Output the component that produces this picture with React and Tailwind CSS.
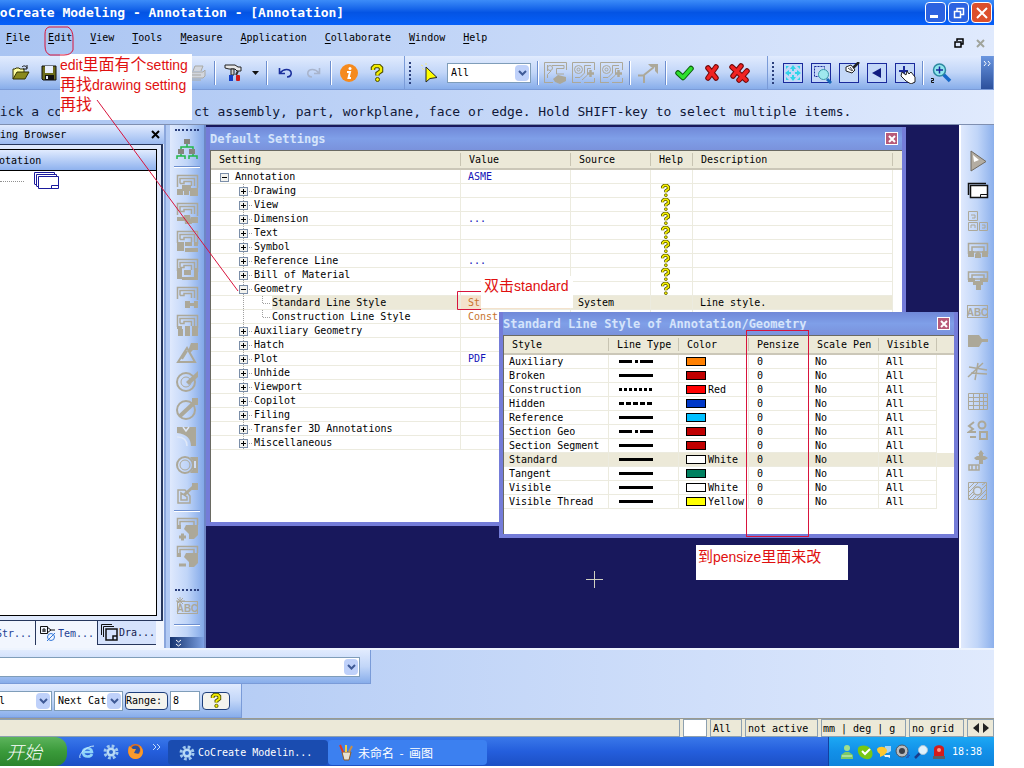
import React, { useState } from 'react';

// --- Data ---
const menus = ['File', 'Edit', 'View', 'Tools', 'Measure', 'Application', 'Collaborate', 'Window', 'Help'];

const settings = [
    { name: 'Annotation', level: 0, open: true, value: 'ASME' },
    { name: 'Drawing', level: 1, help: true },
    { name: 'View', level: 1, help: true },
    { name: 'Dimension', level: 1, value: '...', help: true },
    { name: 'Text', level: 1, help: true },
    { name: 'Symbol', level: 1, help: true },
    { name: 'Reference Line', level: 1, value: '...', help: true },
    { name: 'Bill of Material', level: 1, help: true },
    { name: 'Geometry', level: 1, open: true, help: true },
    { name: 'Standard Line Style', level: 2, value: 'St', changed: true, source: 'System', description: 'Line style.' },
    { name: 'Construction Line Style', level: 2, value: 'Const', changed: true },
    { name: 'Auxiliary Geometry', level: 1 },
    { name: 'Hatch', level: 1 },
    { name: 'Plot', level: 1, value: 'PDF' },
    { name: 'Unhide', level: 1 },
    { name: 'Viewport', level: 1 },
    { name: 'Copilot', level: 1 },
    { name: 'Filing', level: 1 },
    { name: 'Transfer 3D Annotations', level: 1 },
    { name: 'Miscellaneous', level: 1 },
];

const lineStyles = [
    { name: 'Auxiliary', dash: '13 3 3 2', color: '#ff8000', label: '' },
    { name: 'Broken', dash: '', color: '#c00000', label: '' },
    { name: 'Construction', dash: '3 2', color: '#ff0000', label: 'Red' },
    { name: 'Hidden', dash: '5 2', color: '#0038c8', label: '' },
    { name: 'Reference', dash: '', color: '#00c0ff', label: '' },
    { name: 'Section Geo', dash: '13 3 3 2', color: '#c00000', label: '' },
    { name: 'Section Segment', dash: '', color: '#c00000', label: '' },
    { name: 'Standard', dash: '', color: '#ffffff', label: 'White' },
    { name: 'Tangent', dash: '', color: '#008060', label: '' },
    { name: 'Visible', dash: '', color: '#ffffff', label: 'White' },
    { name: 'Visible Thread', dash: '', color: '#ffff00', label: 'Yellow' },
];

// --- Icons ---
const Svg = ({ w = 22, h = 22, children }) => (
    <svg width={w} height={h} viewBox={`0 0 ${w} ${h}`} fill="none" className="shrink-0" aria-hidden="true">
        {children}
    </svg>
);

const HelpMark = ({ w = 11, h = 13 }) => (
    <svg width={w} height={h} viewBox="0 0 14 18" fill="none" className="shrink-0" aria-hidden="true">
        <path d="M3 6V4L5 2H9L11 4V7L7.500 9.500V11.500" stroke="#4d4d00" strokeWidth="4.500" />
        <path d="M3 6V4L5 2H9L11 4V7L7.500 9.500V11.500" stroke="#f4ee00" strokeWidth="2.400" />
        <circle cx="7.500" cy="15.500" r="2" fill="#f4ee00" stroke="#4d4d00" />
    </svg>
);

const Chevron = () => (
    <Svg w={9} h={6}><path d="M1 1L4.500 4.500L8 1" stroke="#3f5a96" strokeWidth="2" /></Svg>
);

const FolderIcon = () => (
    <Svg w={18} h={16}>
        <path d="M1 14V4H3L4 3H7L8 4H12V7" fill="#ffffa0" stroke="#333300" />
        <path d="M1 14L5 7H17L13 14Z" fill="#8a8a1c" stroke="#333300" />
        <path d="M10 2C12 0 14 1 15 3M15 0V4H11" stroke="#111" />
    </Svg>
);

const SaveIcon = () => (
    <Svg w={16} h={16}>
        <path d="M1 1H15V15H2L1 14Z" fill="#6b6b1a" stroke="#111" />
        <rect x="4" y="1" width="8" height="7" fill="#e8eefc" />
        <rect x="4" y="10" width="9" height="5" fill="#111" />
        <rect x="5" y="11" width="2" height="3" fill="#e8eefc" />
    </Svg>
);

const PrintIcon = () => (
    <Svg w={18} h={16}>
        <path d="M5 6L7 1H15L13 6M2 7H15L17 5V11L15 13H2ZM4 10H13M4 15H13" stroke="#a9a9a4" fill="#d2d6de" />
    </Svg>
);

const HammerIcon = () => (
    <Svg w={19} h={19}>
        <path d="M1 2H11L14 4H17V8H13L11 6H5L1 5Z" fill="#e8e8e8" stroke="#222" />
        <path d="M7 6H10V12H7Z" fill="#cfcfcf" stroke="#222" />
        <path d="M14 8L12 12" stroke="#333" strokeWidth="2" />
        <rect x="5" y="12" width="4" height="6" fill="#1240c8" />
        <rect x="12" y="12" width="4" height="6" rx="1" fill="#d01818" />
    </Svg>
);

const UndoIcon = ({ color = '#1a2f9c', flip = false }) => (
    <Svg w={15} h={12}>
        <path
            d={flip ? 'M13.500 1V6.500H8M13 6C9 1 3 2 2 5C1 8 3 10 6 10' : 'M1.500 1V6.500H7M2 6C6 1 12 2 13 5C14 8 12 10 9 10'}
            stroke={color}
            strokeWidth="1.600"
        />
    </Svg>
);

const InfoIcon = () => (
    <Svg w={20} h={20}>
        <circle cx="10" cy="10" r="9" fill="#f58a1e" />
        <circle cx="11" cy="5.500" r="1.500" fill="#fff" />
        <path d="M8 9H11L9.500 15H12" stroke="#fff" strokeWidth="2" />
    </Svg>
);

const CursorIcon = () => (
    <Svg w={18} h={20}>
        <path d="M5 4V19L9 15.500L16 14.500Z" fill="#ffff00" stroke="#222" />
        <path d="M1 5L3 7M5 0V2M0 2L2 3" stroke="#f0e68c" />
    </Svg>
);

const grey = '#aca899';

const AnnoViewIcon = ({ kind }) => (
    <Svg w={24} h={22}>
        <path d="M0.500 21V0.500H22.500V8M0.500 20.500H9" stroke={grey} />
        {kind === 0 ? (
            <>
                <path d="M3.500 16V12.500L7 9M8 3.500H20V6.500H12.500V12H20M3.500 3V9" stroke={grey} />
                <circle cx="6" cy="6" r="2.500" stroke={grey} />
                <path d="M9 17L14 13L22 15V19L16 22L11 20Z" fill={grey} />
            </>
        ) : (
            <>
                <circle cx="6.500" cy="7.500" r="4" stroke={grey} />
                <circle cx="6.500" cy="7.500" r="1.500" stroke={grey} />
                <path d="M3 15.500H8L12.500 11V3.500H19M10 18L15.500 13V6.500H19" stroke={grey} />
                <path d="M15 11.500H22M18.500 8V15" stroke={grey} strokeWidth="2.500" />
                <path d="M12 20.500H22.500V16" stroke={grey} />
            </>
        )}
    </Svg>
);

const ArrowUpIcon = () => (
    <Svg w={20} h={20}>
        <path d="M0 12.500H6V20M6 12L16 4" stroke={grey} strokeWidth="2" />
        <path d="M10 1H20V11L17 8V4H13Z" fill={grey} />
    </Svg>
);

const CheckIcon = () => (
    <Svg w={19} h={16}>
        <path d="M3 8L8 12.500L16 3.500" stroke="#0a5c0a" strokeWidth="5.500" strokeLinecap="round" strokeLinejoin="round" />
        <path d="M3 8L8 12.500L16 3.500" stroke="#2fe02f" strokeWidth="3.500" strokeLinecap="round" strokeLinejoin="round" />
    </Svg>
);

const crossPath = 'M4 4L12 14M12 3L4 14';
const CrossIcon = () => (
    <Svg w={16} h={18}>
        <path d={crossPath} stroke="#6e0808" strokeWidth="5.500" strokeLinecap="round" />
        <path d={crossPath} stroke="#f02222" strokeWidth="3.500" strokeLinecap="round" />
    </Svg>
);

const DoubleCrossIcon = () => (
    <Svg w={22} h={20}>
        <path d="M3 4L17 17M12 3L4 13M18 8L10 17" stroke="#6e0808" strokeWidth="5.500" strokeLinecap="round" />
        <path d="M3 4L17 17M12 3L4 13M18 8L10 17" stroke="#f02222" strokeWidth="3.500" strokeLinecap="round" />
    </Svg>
);

const BoxedIcon = ({ kind }) => (
    <Svg w={22} h={22}>
        <rect x="1.500" y="1.500" width="19" height="19" fill="#c4d8f8" stroke="#1a2a9c" />
        {kind === 'fit' && (
            <g fill="#30d4e8">
                <path d="M11 3L14 7H12V9H10V7H8ZM11 19L14 15H12V13H10V15H8ZM3 11L7 8V10H9V12H7V14ZM19 11L15 8V10H13V12H15V14Z" />
                <path d="M4 4H7L4 7ZM18 4V7L15 4ZM4 18V15L7 18ZM18 18H15L18 15Z" />
            </g>
        )}
        {kind === 'window' && (
            <>
                <rect x="4.500" y="4.500" width="10" height="10" stroke="#1a2a9c" strokeDasharray="2 1" />
                <path d="M17 17L21 21" stroke="#1668b8" strokeWidth="3" />
                <circle cx="13.500" cy="12.500" r="5" fill="#9fe8ee" stroke="#3c98a8" />
            </>
        )}
        {kind === 'brush' && (
            <>
                <path d="M21 0L15 6" stroke="#222" strokeWidth="2.500" />
                <path d="M8 5L13 3L17 8L14 11L8 9Z" fill="#fff" stroke="#222" />
                <path d="M10 6L14 9M12 5L15 9" stroke="#444" />
            </>
        )}
        {kind === 'back' && <path d="M6 11L15 6V16Z" fill="#101c80" />}
        {kind === 'pan' && (
            <>
                <path d="M10 4V13M5 9H14" stroke="#1a2a9c" strokeWidth="2" />
                <path d="M8 10L12 13L13 9L15 12L17 10L21 15V20L17 22L12 19L7 14Z" fill="#fff" stroke="#222" />
            </>
        )}
    </Svg>
);

const ZoomPlusIcon = () => (
    <Svg w={22} h={22}>
        <path d="M13 12L20 19" stroke="#1668c8" strokeWidth="3.500" />
        <circle cx="9.500" cy="8" r="6" fill="#8fe6ec" stroke="#2d88a0" strokeWidth="1.500" />
        <path d="M9.500 4.500V11.500M6 8H13" stroke="#1a2a9c" strokeWidth="1.500" />
        <path d="M1 16.500H3.500V18.500H1.500V20.500H4" stroke="#111" />
    </Svg>
);

const TreeIcon = () => (
    <Svg w={22} h={22}>
        <path d="M11 6V9M5 11V9H17V11M5 15V18M1 21V18H9V21M17 15V18M13 21V18H21V21" stroke="#22b84a" strokeWidth="1.500" />
        <rect x="8" y="1" width="6" height="5" fill="#85857d" />
        <rect x="2" y="11" width="6" height="5" fill="#85857d" />
        <rect x="13" y="11" width="6" height="5" fill="#85857d" />
    </Svg>
);

// lower halves of the sheet tools in the side bar
const sheetTails = [
    'M1 15H7V21H1ZM8 16H13V21H8ZM14 14H22V22H14ZM6 11H15V17H6Z',
    'M1 15H9V19H1ZM8 13H14L16 22H9ZM15 15H22V21H15Z',
    'M1 12H8V21H1ZM9 12H16V16H9ZM9 18H22V22H9ZM18 12H22V16H18Z',
    'M1 10H6V21H1ZM8 12H15V17H8ZM6 19H22V22H6ZM18 10H22V19H18Z',
    'M9 15H14V22H9ZM14 17H18V20H14ZM18 15H22V22H18Z',
    'M1 12H6V15H1ZM2 15H7V22H2ZM9 12H14V22H9ZM16 12H22V22H16Z',
];

const SheetIcon = ({ tail }) => (
    <Svg w={23} h={23}>
        <path d="M1.500 13V1.500H21.500V14M4 9.500V4.500H18.500V12M4 9.500H8V7.500H15.500V12" stroke={grey} strokeWidth="1.500" />
        <path d={tail} fill={grey} />
    </Svg>
);

const sideShapes = [
    <g key="angle"><path d="M2 20L11 6L19 20Z M6 17L11 9" stroke={grey} strokeWidth="2" /><path d="M15 1H22V8H17L14 11L12 9Z" fill={grey} /></g>,
    <g key="radius"><circle cx="10" cy="12" r="9" stroke={grey} strokeWidth="2" /><circle cx="10" cy="12" r="5" stroke={grey} /><path d="M10 12L22 1V7L13 15Z" fill={grey} /></g>,
    <g key="dia"><circle cx="10" cy="12" r="9" stroke={grey} strokeWidth="2" /><path d="M4 18L19 4" stroke={grey} strokeWidth="4" /><path d="M16 0H22V7H16Z" fill={grey} /></g>,
    <g key="arc"><path d="M1 1H20V20H15C15 13 11 8 1 7Z" fill={grey} /><path d="M1 11C8 11 11 15 11 20M7 1L10 5L13 1" stroke="#dfe8f8" strokeWidth="1.500" /></g>,
    <g key="slot"><circle cx="9" cy="11" r="8" stroke={grey} strokeWidth="2" /><circle cx="9" cy="11" r="5" stroke={grey} /><path d="M14 3H22V19H14L17 15V7Z" fill={grey} /><path d="M18 7H20V14H18Z" fill="#cfdcf4" /></g>,
    <g key="leader"><path d="M2 8H9L14 14V21H2ZM5 11V18H11V15Z" stroke={grey} strokeWidth="1.500" /><path d="M8 13L17 5" stroke={grey} strokeWidth="3" /><path d="M16 1H22V8H16Z" fill={grey} /></g>,
];

const SheetTool = ({ plus }) => (
    <Svg w={23} h={24}>
        <path d="M1.500 12V1.500H21.500V8M4 10V4.500H18V8" stroke={grey} strokeWidth="1.500" />
        <path d="M1 8H5V12H1ZM10 8H22V18L18 22H13V17L8 12Z" fill={grey} />
        <path d={plus ? 'M3 20H10M6.500 16.500V23.500' : 'M3 20H10'} stroke={grey} strokeWidth="3" />
    </Svg>
);

const AbcIcon = ({ star }) => (
    <Svg w={23} h={20}>
        <rect x="1.500" y="4.500" width="20" height="12" stroke={grey} />
        {star && <path d="M4 0V9M0 4H9M1 1L7 7M7 1L1 7" stroke={grey} />}
        <text x="11.500" y="14.500" textAnchor="middle" fontSize="10" fontWeight="bold" fontFamily="Liberation Sans, sans-serif" fill={grey}>ABC</text>
    </Svg>
);

const SheetsIcon = ({ color = '#1a1a9c' }) => (
    <Svg w={25} h={18}>
        <path d="M0.500 12V0.500H20.500V3M2.500 14V2.500H22.500V5M0.500 12.500H2M2.500 14.500H4" stroke={color} />
        <path d="M4.500 4.500H24.500V16.500H4.500Z" fill="#fff" stroke={color} />
        <path d="M17.500 17V13.500H24" stroke={color} />
    </Svg>
);

const rightIcons = [
    <Svg key="play"><path d="M4 1L19 11.500L4 21Z" fill="#b4ada2" stroke="#6f6a62" /><path d="M6 5L12 10L7 12Z" fill="#fff" /></Svg>,
    <Svg key="sheets"><path d="M1.500 15V3.500H19" stroke="#111" strokeWidth="1.500" /><path d="M3.500 5.500H20.500V17.500H3.500Z" fill="#fff" stroke="#111" strokeWidth="1.500" /><path d="M13.500 17V14.500H20" stroke="#111" /></Svg>,
    <Svg key="views"><path d="M1.500 1.500H10.500V10.500H1.500ZM1.500 12.500H10.500V20.500H1.500ZM12.500 12.500H20.500V20.500H12.500ZM4 5H8V8H5M4 18V15H8V18M15 15H18V18H15" stroke={grey} /></Svg>,
    <Svg key="s1"><path d="M1.500 14V3.500H20.500V14M5 7H17V12H5Z" stroke={grey} strokeWidth="1.500" /><path d="M1 11H7V17H1ZM8 14L11 11L14 14V18H8ZM15 11H21V17H15Z" fill={grey} /></Svg>,
    <Svg key="s2"><path d="M1.500 10V2H20.500V10M5 5H17V9H5Z" stroke={grey} strokeWidth="1.500" /><path d="M1 8H8V12H1ZM13 8H21V12H13ZM6 11H16V15H14V20H9V15H6Z" fill={grey} /></Svg>,
    <AbcIcon key="abc" />,
    <Svg key="tag"><path d="M1 5H12L15 9H21V12H15L12 17H1Z" fill={grey} /></Svg>,
    <Svg key="lines"><path d="M2 7L20 10M1 17L16 3M11 3L8 20M4 13L20 14" stroke={grey} strokeWidth="1.500" /></Svg>,
    <Svg key="grid"><path d="M1.500 3.500H20.500V19.500H1.500ZM1 7.500H21M1 11.500H21M1 15.500H21M6.500 3V20M12.500 3V20M16.500 3V20" stroke={grey} /></Svg>,
    <Svg key="symbols"><path d="M7 2L2 6L6 9L2 12H9M3 17H9" stroke={grey} strokeWidth="2" /><circle cx="15" cy="5" r="3.500" stroke={grey} strokeWidth="2" /><rect x="13" y="12" width="7" height="7" stroke={grey} strokeWidth="2" /></Svg>,
    <Svg key="move"><path d="M14 0L17 4H16V6H18L21 8L18 10H16V14H12V10H9L7 8L10 6H12V4H11Z" fill={grey} /><path d="M2 15H12V20H2ZM5 15V20M9 15V20" stroke={grey} strokeWidth="1.500" /></Svg>,
    <Svg key="hatch"><path d="M1.500 2.500H19.500V19.500H1.500ZM2 8L8 2M2 12L12 2M2 16L6 12M2 19L7 14M6 19L9 16M10 19L19 10M14 19L19 14M15 5L18 3M15 9L19 5" stroke={grey} /><circle cx="10.500" cy="11" r="4" fill="#cfdff8" stroke={grey} strokeWidth="1.500" /></Svg>,
];

const GearIcon = () => (
    <Svg w={16} h={16}>
        <circle cx="8" cy="8" r="6" stroke="#9fc8ee" strokeWidth="3" strokeDasharray="2.700 2" />
        <circle cx="8" cy="8" r="4.500" fill="#b8daf6" />
        <circle cx="8" cy="8" r="2" fill="#2a62c8" />
    </Svg>
);

const CloseX = ({ size = 9, color = '#fff' }) => (
    <Svg w={size} h={size}><path d={`M1 1L${size - 1} ${size - 1}M${size - 1} 1L1 ${size - 1}`} stroke={color} strokeWidth="2" /></Svg>
);

// --- Small building blocks ---
const Tool = ({ label, children }) => (
    <button aria-label={label} className="flex h-7 w-7 shrink-0 items-center justify-center">{children}</button>
);
const Sep = () => (
    <div className="flex w-2 shrink-0 justify-center"><div className="h-6 border-l border-r border-l-[#6d8fd0] border-r-white" /></div>
);
const HSep = () => (
    <div className="flex h-2 w-full shrink-0 items-center px-1"><div className="h-[2px] w-full border-t border-b border-t-[#6d8fd0] border-b-white" /></div>
);
const Grip = () => (
    <div className="mx-1 h-[22px] w-[3px] shrink-0 border-l-2 border-dotted border-[#2b3f7c]" />
);
const band = 'flex items-center border-b border-r border-[#7a9bd8] bg-linear-to-b from-[#e1ebfe] via-[#c2d6f8] to-[#88adea]';

const Combo = ({ label, value, className }) => (
    <div className={`relative flex h-5 items-center border border-[#7f9db9] bg-white ${className}`}>
        <select aria-label={label} className="h-full w-full appearance-none overflow-hidden bg-transparent pr-4 pl-[3px] outline-none">
            <option>{value}</option>
        </select>
        <span className="pointer-events-none absolute top-px right-px bottom-px flex w-[14px] items-center justify-center rounded-sm bg-[#bfd1fa]">
            <Chevron />
        </span>
    </div>
);

const TreeGlyph = ({ level, open }) => {
    const w = level === 0 ? 24 : level === 1 ? 43 : 61;
    const x = level === 0 ? 9 : 28;
    return (
        <Svg w={w} h={13}>
            {level > 0 && <path d="M32.500 0V13" stroke="#a0a0a0" strokeDasharray="1 1" />}
            {level === 1 && <path d="M38 7.500H42" stroke="#a0a0a0" strokeDasharray="1 1" />}
            {level === 2 && <path d="M51.500 0V7.500H60" stroke="#a0a0a0" strokeDasharray="1 1" />}
            {level < 2 && (
                <>
                    <rect x={x + 0.5} y="3.500" width="8" height="8" fill="#f2f2ee" stroke="#7b8ea8" />
                    <path d={`M${x + 2} 7.500H${x + 7}`} stroke="#000" />
                    {!open && <path d={`M${x + 4.5} 5V10`} stroke="#000" />}
                </>
            )}
        </Svg>
    );
};

const Dialog = ({ title, className, children }) => (
    <section className={`absolute flex flex-col overflow-hidden border-r-4 border-b-4 border-l-4 border-[#747cd8] bg-white ${className}`}>
        <header className="flex h-[23px] shrink-0 items-center justify-between bg-linear-to-b from-[#7088d8] via-[#7f9fe8] to-[#7a92dc] pr-1">
            <h2 className="text-xs font-bold whitespace-nowrap text-[#d5e4fb]">{title}</h2>
            <button aria-label={`Close ${title}`} className="flex h-[13px] w-[13px] items-center justify-center border border-white bg-[#b85a78]">
                <CloseX size={8} />
            </button>
        </header>
        <div className="min-h-0 flex-1 border-t border-l border-[#6a6a62]">{children}</div>
    </section>
);

const th = 'h-[19px] border-b-2 border-[#cbc7b8] bg-[#ece9d8] p-0 text-left font-normal whitespace-nowrap';
const thInner = 'block h-[13px] border-r border-[#c8c4b2] pl-2 leading-[13px]';
const td = 'h-[14px] overflow-hidden border-r border-b border-[#ecebdf] p-0 whitespace-nowrap';

const SettingsDialog = () => {
    const [selected, setSelected] = useState('Standard Line Style');

    return (
        <Dialog title="Default Settings" className="top-[2px] left-0 h-[399px] w-[700px]">
            <table className="w-full table-fixed border-separate border-spacing-0">
                <colgroup>
                    <col className="w-[250px]" /><col className="w-[110px]" /><col className="w-[80px]" />
                    <col className="w-[42px]" /><col className="w-[200px]" /><col />
                </colgroup>
                <thead>
                    <tr>
                        {['Setting', 'Value', 'Source', 'Help', 'Description'].map((h) => (
                            <th key={h} className={th}><span className={thInner}>{h}</span></th>
                        ))}
                        <th className={th} aria-label="Spacer" />
                    </tr>
                </thead>
                <tbody>
                    {settings.map((row) => {
                        const active = row.name === selected;
                        return (
                            <tr key={row.name} onClick={() => setSelected(row.name)}>
                                <td className={td}>
                                    <div className="flex">
                                        <TreeGlyph level={row.level} open={row.open} />
                                        <span className={active ? 'flex-1 bg-[#ece9d8]' : 'flex-1'}>{row.name}</span>
                                    </div>
                                </td>
                                <td className={`${td} pl-[7px] ${row.changed ? 'text-[#c8742c]' : 'text-[#1414b8]'} ${active ? 'bg-[#f4e2cc]' : ''}`}>{row.value}</td>
                                <td className={`${td} pl-[7px] ${active ? 'bg-[#ece9d8]' : ''}`}>{row.source}</td>
                                <td className={`${td} ${active ? 'bg-[#ece9d8]' : ''}`}>
                                    {row.help && <span className="flex h-[13px] justify-center pr-3"><HelpMark /></span>}
                                </td>
                                <td className={`${td} pl-[7px] ${active ? 'bg-[#ece9d8]' : ''}`}>{row.description}</td>
                                <td className="p-0" />
                            </tr>
                        );
                    })}
                </tbody>
            </table>
        </Dialog>
    );
};

const LineStyleDialog = () => {
    const [selected, setSelected] = useState('Standard');

    return (
        <Dialog title="Standard Line Style of Annotation/Geometry" className="top-[187px] left-[293px] h-[226px] w-[459px]">
            <table className="w-full table-fixed border-separate border-spacing-0">
                <colgroup>
                    <col className="w-[105px]" /><col className="w-[70px]" /><col className="w-[70px]" /><col className="w-[60px]" />
                    <col className="w-[70px]" /><col className="w-[58px]" /><col />
                </colgroup>
                <thead>
                    <tr>
                        {['Style', 'Line Type', 'Color', 'Pensize', 'Scale Pen', 'Visible'].map((h) => (
                            <th key={h} className={th}><span className={thInner}>{h}</span></th>
                        ))}
                        <th className={th} aria-label="Spacer" />
                    </tr>
                </thead>
                <tbody>
                    {lineStyles.map((row) => (
                        <tr key={row.name} onClick={() => setSelected(row.name)} className={row.name === selected ? 'bg-[#ece9d8]' : ''}>
                            <td className={`${td} pl-[5px]`}>{row.name}</td>
                            <td className={`${td} pl-[10px]`}>
                                <Svg w={34} h={4}><path d="M0 1.500H34" stroke="#000" strokeWidth="3" strokeDasharray={row.dash || undefined} /></Svg>
                            </td>
                            <td className={`${td} pl-[7px]`}>
                                <span className="flex items-center gap-[2px]">
                                    <span className="h-[9px] w-5 border border-black" style={{ backgroundColor: row.color }} />
                                    {row.label}
                                </span>
                            </td>
                            <td className={`${td} pl-2`}>0</td>
                            <td className={`${td} pl-[6px]`}>No</td>
                            <td className={`${td} pl-[7px]`}>All</td>
                            <td className="p-0" />
                        </tr>
                    ))}
                </tbody>
            </table>
        </Dialog>
    );
};

const Browser = () => (
    <aside className="flex w-[166px] shrink-0 flex-col overflow-hidden border-r-2 border-[#8aa6dc] bg-[#dfe9fc]">
        <div className="flex h-[19px] items-center justify-between bg-linear-to-b from-[#e1ebfe] to-[#9bbaf0] pr-1">
            <h2 className="-ml-6 whitespace-nowrap">Drawing Browser</h2>
            <button aria-label="Close browser"><CloseX color="#000" /></button>
        </div>
        <div className="mr-px flex flex-1 flex-col border-t border-r-2 border-b border-[#26365c] pt-1 pr-1 pb-1">
            <div className="flex flex-1 flex-col border-t border-r border-b border-black bg-white">
                <div className="flex h-[21px] items-center border-b border-black bg-linear-to-b from-[#e1ebfe] to-[#8fb2ee]">
                    <span className="-ml-[19px]">Annotation</span>
                </div>
                <div className="flex h-5 items-center">
                    <span className="mr-[10px] w-6 border-t border-dotted border-[#909090]" />
                    <SheetsIcon />
                </div>
            </div>
        </div>
        <nav className="flex h-[27px] items-start bg-[#f2f6fe] whitespace-nowrap text-[#1f3f94]">
            <button className="-ml-1 flex h-6 w-10 items-center border-r border-[#26365c]">Str...</button>
            <button className="flex h-6 w-[61px] items-center gap-px pl-[3px]">
                <Svg w={18} h={18}>
                    <path d="M1.500 2.500H8.500V9.500H1.500ZM8 3L12 6L8 9M12 6H16" stroke="#111" />
                    <path d="M4 8V5H6V8M4 7H6" stroke="#111" />
                    <circle cx="12" cy="13" r="3.500" stroke="#3478d8" />
                    <path d="M8 17L16 9" stroke="#3478d8" />
                </Svg>
                Tem...
            </button>
            <button className="flex h-6 w-[59px] items-center gap-px border-b border-l border-[#26365c] bg-[#d5e2fc] pl-[3px] text-[#14204c]">
                <Svg w={17} h={17}>
                    <path d="M0.500 11V0.500H11M2.500 13V2.500H13" stroke="#111" />
                    <path d="M5 5H16V16H5ZM12 16V12H16" stroke="#111" strokeWidth="1.500" />
                </Svg>
                Dra...
            </button>
        </nav>
    </aside>
);

const SideBar = () => (
    <div className="ml-1 flex w-[36px] shrink-0 flex-col items-center border-r-2 border-[#6d86c4] bg-linear-to-r from-[#dfe9fd] via-[#c0d5f8] to-[#82a8e8]">
        <div className="mt-1 mb-1 h-[2px] w-6 shrink-0 border-t-2 border-dotted border-[#2b3f7c]" />
        <Tool label="Structure"><TreeIcon /></Tool>
        <HSep />
        {sheetTails.map((tail, i) => <Tool key={i} label={`View ${i + 1}`}><SheetIcon tail={tail} /></Tool>)}
        {sideShapes.map((shape) => <Tool key={shape.key} label={shape.key}><Svg w={23} h={22}>{shape}</Svg></Tool>)}
        <HSep />
        <Tool label="Add view"><SheetTool plus /></Tool>
        <Tool label="Remove view"><SheetTool /></Tool>
        <div className="mt-[18px] mb-[2px] h-[2px] w-6 shrink-0 border-t-2 border-dotted border-[#2b3f7c]" />
        <Tool label="Text"><AbcIcon star /></Tool>
        <HSep />
        <button aria-label="More tools" className="mt-auto flex h-[11px] w-full shrink-0 items-center bg-linear-to-r from-[#16336e] to-[#7ea2e4] pl-[6px]">
            <Svg w={5} h={8}><path d="M0 1L2.500 3L5 1M0 5L2.500 7L5 5" stroke="#fff" /></Svg>
        </button>
    </div>
);

const TitleBar = () => (
    <header className="flex h-[25px] shrink-0 items-center justify-between bg-linear-to-b from-[#3c8cf8] via-[#0454e4] to-[#0660fa] pr-[2px] text-white">
        <h1 className="-ml-2 text-[13px] font-bold whitespace-nowrap">CoCreate Modeling - Annotation - [Annotation]</h1>
        <div className="flex gap-[2px]">
            <button aria-label="Minimize" className="flex h-[21px] w-[21px] items-end rounded-sm border border-white bg-[#2c62e0] p-1">
                <span className="h-[3px] w-2 bg-white" />
            </button>
            <button aria-label="Restore" className="flex h-[21px] w-[21px] items-center justify-center rounded-sm border border-white bg-[#2c62e0]">
                <Svg w={12} h={12}><path d="M4 4V1.500H10.500V7.500H8M1.500 4.500H7.500V10.500H1.500Z" stroke="#fff" strokeWidth="1.500" /></Svg>
            </button>
            <button aria-label="Close" className="flex h-[21px] w-[21px] items-center justify-center rounded-sm border border-white bg-[#dc4f2c]">
                <CloseX size={12} />
            </button>
        </div>
    </header>
);

const MenuBar = () => (
    <nav className="flex h-[31px] shrink-0 items-start justify-between pt-[6px]">
        <div className="flex gap-[18px] pl-[6px]">
            {menus.map((m) => (
                <button key={m}><span className="underline underline-offset-2">{m[0]}</span>{m.slice(1)}</button>
            ))}
        </div>
        <div className="flex gap-3 pt-[7px] pr-[9px]">
            <button aria-label="Restore document">
                <Svg w={10} h={10}><path d="M3 3V1H9V6H7M1 4H7V9H1Z" stroke="#000" strokeWidth="1.500" /></Svg>
            </button>
            <button aria-label="Close document"><CloseX color="#a0a49c" /></button>
        </div>
    </nav>
);

const ToolBar = () => (
    <div className="flex h-[34px] shrink-0 overflow-hidden">
        <div className={`${band} w-[405px] shrink-0`}>
            <div className="-ml-[21px] flex items-center">
                <Tool label="New"><Svg w={16} h={16}><path d="M2 1H14V15H2Z" fill="#fff" stroke="#999" /></Svg></Tool>
                <Tool label="Open"><FolderIcon /></Tool>
                <Tool label="Save"><SaveIcon /></Tool>
                <div className="w-[120px]" />
                <Tool label="Print"><PrintIcon /></Tool>
                <Sep />
                <Tool label="Options"><HammerIcon /></Tool>
                <button aria-label="More options" className="flex w-4 justify-center">
                    <Svg w={7} h={4}><path d="M0 0H7L3.500 4Z" fill="#111" /></Svg>
                </button>
                <Sep />
                <Tool label="Undo"><UndoIcon /></Tool>
                <Tool label="Redo"><UndoIcon color="#a8b4cc" flip /></Tool>
                <Sep />
                <Tool label="Info"><InfoIcon /></Tool>
                <Tool label="Help"><HelpMark w={14} h={18} /></Tool>
            </div>
        </div>
        <div className={`${band} w-[363px] shrink-0`}>
            <Grip />
            <Tool label="Select"><CursorIcon /></Tool>
            <Combo label="Filter" value="All" className="ml-[3px] w-[84px]" />
            <div className="w-[3px]" />
            <Sep />
            <Tool label="Annotate view"><AnnoViewIcon kind={0} /></Tool>
            <Tool label="Add annotation"><AnnoViewIcon kind={1} /></Tool>
            <Tool label="Copy annotation"><AnnoViewIcon kind={1} /></Tool>
            <Sep />
            <Tool label="Leader"><ArrowUpIcon /></Tool>
            <Sep />
            <Tool label="Accept"><CheckIcon /></Tool>
            <Tool label="Cancel"><CrossIcon /></Tool>
            <Tool label="Cancel all"><DoubleCrossIcon /></Tool>
        </div>
        <div className={`${band} flex-1`}>
            <Grip />
            <Tool label="Fit"><BoxedIcon kind="fit" /></Tool>
            <Tool label="Zoom window"><BoxedIcon kind="window" /></Tool>
            <Tool label="Redraw"><BoxedIcon kind="brush" /></Tool>
            <Tool label="Previous"><BoxedIcon kind="back" /></Tool>
            <Tool label="Pan"><BoxedIcon kind="pan" /></Tool>
            <Sep />
            <Tool label="Zoom in"><ZoomPlusIcon /></Tool>
            <button aria-label="More" className="ml-auto flex h-full w-3 items-start justify-center bg-linear-to-b from-[#6a96e0] to-[#2c509c] pt-[5px]">
                <Svg w={8} h={5}><path d="M1 0L3 2.500L1 5M5 0L7 2.500L5 5" stroke="#fff" /></Svg>
            </button>
        </div>
    </div>
);

const PromptLine = () => (
    <p className="flex h-[34px] shrink-0 items-center overflow-hidden pt-2 text-[13px] whitespace-nowrap text-[#101838]">
        <span className="-ml-2 w-[202px] shrink-0">Pick a co</span>
        <span>ct assembly, part, workplane, face or edge. Hold SHIFT-key to select multiple items.</span>
    </p>
);

const BottomBars = () => (
    <div className="shrink-0 border-t-2 border-[#eef4fe]">
        <div className={`${band} h-[34px] w-[371px]`}>
            <Combo label="Command" value="" className="-ml-px w-[361px]" />
        </div>
        <div className={`${band} h-[34px] w-[242px] gap-[2px] overflow-hidden`}>
            <Combo label="Catch" value="All" className="-ml-[17px] w-[69px] shrink-0" />
            <Combo label="Catch mode" value="Next Cat" className="w-[69px] shrink-0" />
            <button className="h-[18px] w-[43px] shrink-0 rounded-sm border border-[#1f3f7c] bg-[#f4f3ee] text-left whitespace-nowrap">Range:</button>
            <input aria-label="Range" defaultValue="8" className="h-5 w-[30px] shrink-0 border border-[#7f9db9] bg-white pl-[2px] outline-none" />
            <button aria-label="Help" className="flex h-[18px] w-7 shrink-0 items-center justify-center rounded-sm border border-[#1f3f7c] bg-[#f4f3ee]">
                <HelpMark w={12} h={15} />
            </button>
        </div>
    </div>
);

const cell = 'flex items-center border border-[#8da0b0] whitespace-pre';

const StatusBar = () => (
    <footer className="flex h-[19px] shrink-0 gap-[3px] border-t border-[#9a9a90] bg-[#ece9d8]">
        <div className={`${cell} flex-1 border-l-0`} />
        <div className={`${cell} w-6 bg-white`} />
        <div className={`${cell} w-8 pl-[2px]`}>All</div>
        <div className={`${cell} w-[73px] pl-[2px]`}>not active</div>
        <div className={`${cell} w-[85px] pl-px`}>mm | deg | g</div>
        <div className={`${cell} w-[55px] pl-[2px]`}>no grid</div>
        <div className={`${cell} w-[27px] justify-center gap-1`}>
            <button aria-label="Scroll left"><Svg w={6} h={10}><path d="M6 0V10L0 5Z" fill="#222" /></Svg></button>
            <button aria-label="Scroll right"><Svg w={6} h={10}><path d="M0 0V10L6 5Z" fill="#222" /></Svg></button>
        </div>
    </footer>
);

const Taskbar = () => (
    <div className="flex h-[29px] shrink-0 items-stretch bg-linear-to-b from-[#3a78ea] via-[#245edc] to-[#1c4fc4] text-white">
        <button className="w-[67px] rounded-r-xl bg-linear-to-b from-[#5cb45c] via-[#3a9a3a] to-[#2c842c] pl-[6px] text-left text-[18px] font-light text-white italic">
            <span className="font-['Noto_Sans_CJK_SC',sans-serif]">开始</span>
        </button>
        <div className="flex w-[101px] items-center gap-2 pl-3">
            <button aria-label="Internet Explorer">
                <Svg w={16} h={16}>
                    <path d="M13 10C12 13 5 14 4 9C3 4 12 2 13 8H5" stroke="#8fd4fa" strokeWidth="2.500" />
                    <path d="M1 14C-1 10 8 2 15 2" stroke="#c4e8fc" />
                </Svg>
            </button>
            <button aria-label="CoCreate"><GearIcon /></button>
            <button aria-label="Firefox">
                <Svg w={17} h={17}>
                    <circle cx="8.500" cy="8.500" r="7.500" fill="#e8701a" />
                    <circle cx="8.500" cy="7" r="4.500" fill="#2a50a0" />
                    <path d="M2 3L6 6L9 6L7 10L12 11C14 9 14 5 12 2C18 6 17 16 8.500 16C2 16 0 9 2 3Z" fill="#f89a2c" />
                </Svg>
            </button>
            <div className="-mt-2"><Svg w={9} h={8}><path d="M1 0L4 3L1 6M5 0L8 3L5 6" stroke="#c4dcfc" /></Svg></div>
        </div>
        <button className="mt-[3px] mb-px flex w-[160px] items-center gap-[3px] rounded-sm bg-[#1a4cb0] pl-[11px]">
            <GearIcon />CoCreate Modelin...
        </button>
        <button className="mt-[3px] mb-px flex w-[159px] items-center gap-1 rounded-sm bg-[#3c80f0] pl-[10px] text-xs">
            <Svg w={16} h={17}>
                <path d="M4 8H13L11 16H6Z" fill="#e8e0d0" stroke="#8a5a2a" />
                <path d="M5 8L2 1" stroke="#e03c20" strokeWidth="2" />
                <path d="M8 8V1" stroke="#f4d040" strokeWidth="2" />
                <path d="M11 8L14 2" stroke="#c89048" strokeWidth="2" />
            </Svg>
            <span className="font-['Noto_Sans_CJK_SC',sans-serif] whitespace-pre">未命名  -  画图</span>
        </button>
        <div className="ml-auto flex w-[166px] items-center gap-[2px] border-l border-[#1240a0] bg-linear-to-b from-[#1ca8f4] via-[#1290e8] to-[#0f84dc] pl-[10px]">
            <Svg w={16} h={16}><circle cx="8" cy="4" r="3" fill="#9fe08c" /><path d="M2 15V11L6 8H10L14 11V15Z" fill="#7cc868" /><path d="M3 12H13" stroke="#d8f8cc" /></Svg>
            <Svg w={17} h={16}><path d="M1 4C4 0 12 1 15 7C17 13 13 16 9 15C3 14 0 9 1 4Z" fill="#78c814" /><path d="M5 7L8 10L13 5" stroke="#fff" strokeWidth="2" /></Svg>
            <Svg w={17} h={16}><path d="M9 2H15V7L12 9H8Z" fill="#a8d4f4" /><path d="M1 5C3 2 9 2 11 6C11 10 7 12 4 13L4 10C2 9 1 7 1 5Z" fill="#ffc830" /><path d="M8 11H14V14L12 13H9Z" fill="#e8f0fa" /></Svg>
            <Svg w={16} h={16}><circle cx="7" cy="7" r="6" fill="#b8bcc0" stroke="#50545c" /><circle cx="7" cy="7" r="3" fill="#3c4048" /><path d="M11 14L15 11M13 8V14" stroke="#2850b0" /></Svg>
            <Svg w={16} h={16}><path d="M2 14L7 9" stroke="#1a3c8c" strokeWidth="2.500" /><circle cx="10" cy="6" r="4.500" fill="#e0f2fc" stroke="#a8c4d8" /></Svg>
            <Svg w={16} h={16}><path d="M3 12V5C3 0 13 0 13 5V12Z" fill="#d41c1c" /><circle cx="8" cy="6" r="2" fill="#ff9a8a" /><path d="M2 12H14V15H2Z" fill="#5c6068" /></Svg>
            <time className="ml-[3px]">18:38</time>
        </div>
    </div>
);

// --- Red mark-up on top of the window ---
const Cjk = ({ wide, children }) => (
    <span className={`font-['Noto_Sans_CJK_SC',sans-serif] leading-[18px] ${wide ? 'text-[16px]' : 'text-[15px]'}`}>{children}</span>
);
const note = "absolute bg-white font-['Liberation_Sans','Noto_Sans_CJK_SC',sans-serif] text-sm leading-[18px] whitespace-nowrap text-[#e01010]";

const Markup = () => (
    <div className="pointer-events-none absolute inset-0">
        <p className={`${note} top-[54px] left-[60px] h-[66px] w-[132px]`}>
            edit<Cjk wide>里面有个</Cjk>setting<br />
            <Cjk wide>再找</Cjk>drawing setting<br />
            <Cjk wide>再找</Cjk>
        </p>
        <p className={`${note} top-[276px] left-[481px] h-[32px] w-[92px] pl-[3px]`}><Cjk>双击</Cjk>standard</p>
        <p className={`${note} top-[545px] left-[696px] h-[35px] w-[152px] pt-[2px] pl-[2px]`}><Cjk>到</Cjk>pensize<Cjk>里面来改</Cjk></p>
        <svg className="absolute top-0 left-0 h-full w-full" fill="none" stroke="#d8143c" aria-hidden="true">
            <path d="M49 27H68Q73 30 73 38V50Q71 55 64 55H50Q45 53 45 46V34Q45 28 49 27Z" />
            <path d="M97 100L238 291" />
            <path d="M481 291.500H457.500V309.500H481" />
            <rect x="746.500" y="330.500" width="62" height="206" />
        </svg>
    </div>
);

const App = () => {
    return (
        <div className="h-screen w-full overflow-hidden bg-white pr-[30px] pb-[2px]">
            <div className="relative flex h-full flex-col overflow-hidden bg-linear-to-r from-[#a9c4f2] to-[#e0eafd] font-['DejaVu_Sans_Mono','Noto_Sans_CJK_SC',monospace] text-[10px] leading-[13px] text-black">
                <TitleBar />
                <MenuBar />
                <ToolBar />
                <PromptLine />
                <main className="flex min-h-0 flex-1 border-t border-[#7f8fb0]">
                    <Browser />
                    <SideBar />
                    <div className="relative min-w-0 flex-1 overflow-hidden bg-[#18185c]">
                        <svg className="absolute top-[446px] left-[380px]" width="17" height="17" stroke="#d0d0c0" aria-hidden="true">
                            <path d="M8.500 0V17M0 8.500H17" />
                        </svg>
                        <SettingsDialog />
                        <LineStyleDialog />
                    </div>
                    <div className="flex w-[35px] shrink-0 flex-col items-center border-l-2 border-white bg-linear-to-r from-[#dfe9fd] via-[#c0d5f8] to-[#8cb0ec] pt-[21px]">
                        {rightIcons.map((icon) => (
                            <button key={icon.key} aria-label={icon.key} className="flex h-[30px] items-center">{icon}</button>
                        ))}
                    </div>
                </main>
                <BottomBars />
                <StatusBar />
                <Taskbar />
                <Markup />
            </div>
        </div>
    );
};

export default App;
